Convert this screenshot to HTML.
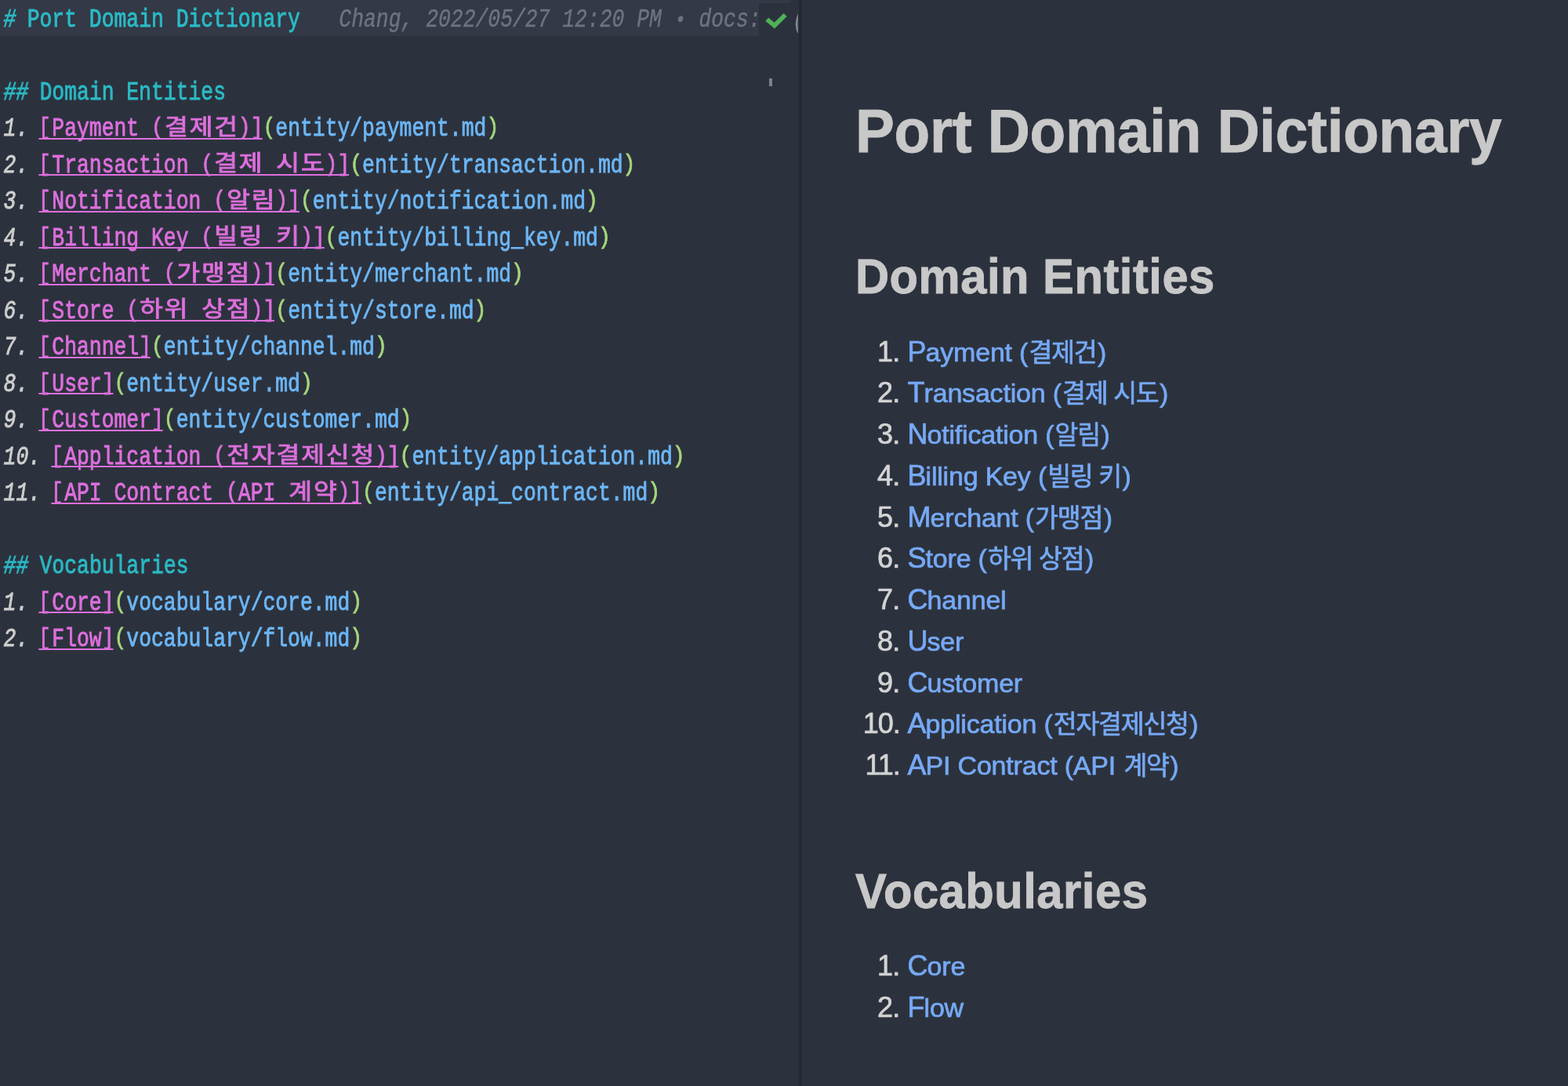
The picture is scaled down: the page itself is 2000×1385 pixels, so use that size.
<!DOCTYPE html>
<html lang="ko">
<head>
<meta charset="utf-8">
<title>Port Domain Dictionary</title>
<style>
*{margin:0;padding:0;box-sizing:border-box}
ol{list-style:none}
html,body{width:2000px;height:1385px;overflow:hidden;background:#2c323d}
body{position:relative;font-family:"Liberation Sans","Noto Sans CJK KR",sans-serif}
#ed{position:absolute;left:0;top:0;width:1019px;height:1385px;overflow:hidden;will-change:transform}
#hl{position:absolute;left:0;top:0;width:1009px;height:45.6px;background:#333946}
#hb{position:absolute;left:967.6px;top:3.6px;width:42px;height:43px;background:#2c323d}
.ln{position:absolute;left:3.0px;white-space:pre;font-family:"Liberation Mono","Noto Sans CJK KR",monospace;font-size:33.0px;line-height:37.383px;height:37.383px;transform:scaleX(0.79936);transform-origin:0 0;color:#cecece;-webkit-text-stroke:0.9px currentColor}
.ln span{display:inline}
.ln .k{display:inline-block;text-align:center;font-family:"Noto Sans CJK KR","NanumGothic",sans-serif;font-size:28.4px;line-height:1px;transform:scaleX(1.42614);transform-origin:50% 50%;letter-spacing:1.64px;left:1.17px;position:relative;top:-1.6px}
.hi{color:#2bbac5;font-style:italic;position:relative;left:2px}
.h{color:#2bbac5}
.b{color:#6d7380;font-style:italic;position:relative;left:2.4px;-webkit-text-stroke:0.45px currentColor}
.ln .bu{display:inline-block;transform:scale(0.86)}
.n{color:#cecece;font-style:italic;position:relative;left:2px}
.ln i{font-style:normal;display:inline-block;transform:scaleY(0.89);transform-origin:50% 22%}
.ln i.l{transform:translateX(-1.8px) scaleY(0.89)}
.a{color:#dd6fdd;position:relative}
.a::after{content:'';position:absolute;left:-1.38px;right:1.38px;top:29.27px;height:2.3px;background:#dd6fdd}
.p{color:#a5d67c}
.u{color:#6cb6f5}
#chk{position:absolute;left:970px;top:10px}
#cut{position:absolute;left:1011px;top:7.83px;width:6.8px;height:46px;overflow:hidden;white-space:pre;color:#7f8692;font:italic 33px "Liberation Mono",monospace;line-height:37.383px;-webkit-text-stroke:0.5px currentColor}
#cut span{display:inline-block;transform:scaleX(0.79936);transform-origin:0 0}
#mark{position:absolute;left:980.5px;top:100px;width:4px;height:10px;background:#7c818c}
#div{position:absolute;left:1017.8px;top:0;width:5px;height:1385px;background:linear-gradient(90deg,rgba(35,39,47,0),#23272f 40%,#23272f 70%,rgba(35,39,47,0))}
#pv{position:absolute;left:0;top:0;width:2000px;height:1385px;will-change:transform}
.h1,.h2,.li{position:absolute;white-space:nowrap;line-height:1}
.h1{transform:scaleX(0.9666);transform-origin:0 0;-webkit-text-stroke:0.8px currentColor;font-weight:bold;font-size:77.4px;letter-spacing:-0.33px;color:#c8c8c8}
.h2{transform:scaleX(0.94);transform-origin:0 0;-webkit-text-stroke:0.9px currentColor;font-weight:bold;font-size:63.5px;letter-spacing:0.55px;color:#c8c8c8}
.li{font-weight:normal;-webkit-text-stroke:0.7px currentColor;font-size:34.0px;letter-spacing:-0.2px;color:#d4d4d4;width:2000px}
.li .num{display:inline-block;width:147.75px;text-align:right;margin-right:0.5px;font-size:36px;letter-spacing:-0.6px;line-height:0}
.li .num.w{letter-spacing:-1.0px}
.li a{color:#76a9f6;display:inline-block;line-height:0}
.li a::first-letter{font-size:36px;letter-spacing:-0.95px}
.li .kr{font-family:"Noto Sans CJK KR","NanumGothic",sans-serif;font-size:32.5px;letter-spacing:-1.25px;margin-left:1.2px;margin-right:1.6px;line-height:0}
</style>
</head>
<body>
<div id="ed">
<div id="hl"></div>
<div id="hb"></div>
<div class="ln" style="top:6.83px"><span class="hi">#</span><span class="h"> Port Domain Dictionary</span>   <span class="b">Chang, 2022/05/27 12:20 PM <span class="bu">•</span> docs:</span></div>
<div class="ln" style="top:99.83px"><span class="hi">##</span><span class="h"> Domain Entities</span></div>
<div class="ln" style="top:146.33px"><span class="n">1.</span> <span class="a"><i class="l">[</i>Payment <i>(</i><span class="k" style="width:118.820px">결제건</span><i>)</i><i>]</i></span><span class="p"><i>(</i></span><span class="u">entity/payment.md</span><span class="p"><i>)</i></span></div>
<div class="ln" style="top:192.83px"><span class="n">2.</span> <span class="a"><i class="l">[</i>Transaction <i>(</i><span class="k" style="width:79.213px">결제</span> <span class="k" style="width:79.213px">시도</span><i>)</i><i>]</i></span><span class="p"><i>(</i></span><span class="u">entity/transaction.md</span><span class="p"><i>)</i></span></div>
<div class="ln" style="top:239.33px"><span class="n">3.</span> <span class="a"><i class="l">[</i>Notification <i>(</i><span class="k" style="width:79.213px">알림</span><i>)</i><i>]</i></span><span class="p"><i>(</i></span><span class="u">entity/notification.md</span><span class="p"><i>)</i></span></div>
<div class="ln" style="top:285.83px"><span class="n">4.</span> <span class="a"><i class="l">[</i>Billing Key <i>(</i><span class="k" style="width:79.213px">빌링</span> <span class="k" style="width:39.607px">키</span><i>)</i><i>]</i></span><span class="p"><i>(</i></span><span class="u">entity/billing_key.md</span><span class="p"><i>)</i></span></div>
<div class="ln" style="top:332.33px"><span class="n">5.</span> <span class="a"><i class="l">[</i>Merchant <i>(</i><span class="k" style="width:118.820px">가맹점</span><i>)</i><i>]</i></span><span class="p"><i>(</i></span><span class="u">entity/merchant.md</span><span class="p"><i>)</i></span></div>
<div class="ln" style="top:378.83px"><span class="n">6.</span> <span class="a"><i class="l">[</i>Store <i>(</i><span class="k" style="width:79.213px">하위</span> <span class="k" style="width:79.213px">상점</span><i>)</i><i>]</i></span><span class="p"><i>(</i></span><span class="u">entity/store.md</span><span class="p"><i>)</i></span></div>
<div class="ln" style="top:425.33px"><span class="n">7.</span> <span class="a"><i class="l">[</i>Channel<i>]</i></span><span class="p"><i>(</i></span><span class="u">entity/channel.md</span><span class="p"><i>)</i></span></div>
<div class="ln" style="top:471.83px"><span class="n">8.</span> <span class="a"><i class="l">[</i>User<i>]</i></span><span class="p"><i>(</i></span><span class="u">entity/user.md</span><span class="p"><i>)</i></span></div>
<div class="ln" style="top:518.33px"><span class="n">9.</span> <span class="a"><i class="l">[</i>Customer<i>]</i></span><span class="p"><i>(</i></span><span class="u">entity/customer.md</span><span class="p"><i>)</i></span></div>
<div class="ln" style="top:564.83px"><span class="n">10.</span> <span class="a"><i class="l">[</i>Application <i>(</i><span class="k" style="width:237.640px">전자결제신청</span><i>)</i><i>]</i></span><span class="p"><i>(</i></span><span class="u">entity/application.md</span><span class="p"><i>)</i></span></div>
<div class="ln" style="top:611.33px"><span class="n">11.</span> <span class="a"><i class="l">[</i>API Contract <i>(</i>API <span class="k" style="width:79.213px">계약</span><i>)</i><i>]</i></span><span class="p"><i>(</i></span><span class="u">entity/api_contract.md</span><span class="p"><i>)</i></span></div>
<div class="ln" style="top:704.33px"><span class="hi">##</span><span class="h"> Vocabularies</span></div>
<div class="ln" style="top:750.83px"><span class="n">1.</span> <span class="a"><i class="l">[</i>Core<i>]</i></span><span class="p"><i>(</i></span><span class="u">vocabulary/core.md</span><span class="p"><i>)</i></span></div>
<div class="ln" style="top:797.33px"><span class="n">2.</span> <span class="a"><i class="l">[</i>Flow<i>]</i></span><span class="p"><i>(</i></span><span class="u">vocabulary/flow.md</span><span class="p"><i>)</i></span></div>
<svg id="chk" width="40" height="40" viewBox="970 10 40 40"><path d="M978.3 24.6 L987.8 32.6 L1001.6 19" fill="none" stroke="#4fb158" stroke-width="5.8"/></svg>
<div id="cut"><span>(</span></div>
<div id="mark"></div>
</div>
<div id="div"></div>
<div id="pv">
<h1 class="h1" style="left:1091.00px;top:129.07px;">Port Domain Dictionary</h1>
<h2 class="h2" style="left:1091.00px;top:321.04px;">Domain Entities</h2>
<ol>
<li class="li" style="left:1000.00px;top:431.71px;"><span class="num">1.</span> <a>Payment (<span class="kr">결제건</span>)</a></li>
<li class="li" style="left:1000.00px;top:484.46px;"><span class="num">2.</span> <a>Transaction (<span class="kr">결제 시도</span>)</a></li>
<li class="li" style="left:1000.00px;top:537.21px;"><span class="num">3.</span> <a>Notification (<span class="kr">알림</span>)</a></li>
<li class="li" style="left:1000.00px;top:589.96px;"><span class="num">4.</span> <a>Billing Key (<span class="kr">빌링 키</span>)</a></li>
<li class="li" style="left:1000.00px;top:642.71px;"><span class="num">5.</span> <a>Merchant (<span class="kr">가맹점</span>)</a></li>
<li class="li" style="left:1000.00px;top:695.46px;"><span class="num">6.</span> <a>Store (<span class="kr">하위 상점</span>)</a></li>
<li class="li" style="left:1000.00px;top:748.21px;"><span class="num">7.</span> <a>Channel</a></li>
<li class="li" style="left:1000.00px;top:800.96px;"><span class="num">8.</span> <a>User</a></li>
<li class="li" style="left:1000.00px;top:853.71px;"><span class="num">9.</span> <a>Customer</a></li>
<li class="li" style="left:1000.00px;top:906.46px;"><span class="num w">10.</span> <a>Application (<span class="kr">전자결제신청</span>)</a></li>
<li class="li" style="left:1000.00px;top:959.21px;"><span class="num w">11.</span> <a>API Contract (API <span class="kr">계약</span>)</a></li>
</ol>
<h2 class="h2" style="left:1091.00px;top:1104.84px;">Vocabularies</h2>
<ol>
<li class="li" style="left:1000.00px;top:1215.41px;"><span class="num">1.</span> <a>Core</a></li>
<li class="li" style="left:1000.00px;top:1268.16px;"><span class="num">2.</span> <a>Flow</a></li>
</ol>
</div>
</body>
</html>
